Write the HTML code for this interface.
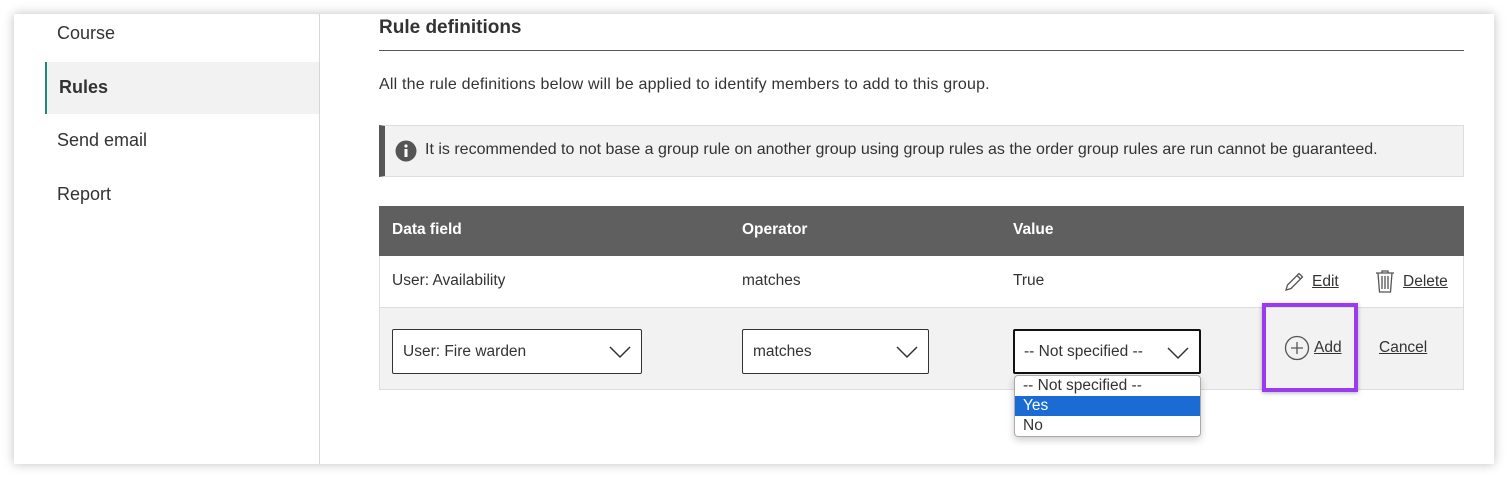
<!DOCTYPE html>
<html><head><style>
*{box-sizing:border-box;margin:0;padding:0}
body{width:1508px;height:478px;background:#fff;font-family:"Liberation Sans",sans-serif;color:#333;position:relative;overflow:hidden}
.card{position:absolute;left:14px;top:14px;width:1480px;height:450px;background:#fff;box-shadow:0 0 10px rgba(0,0,0,.25)}
.a{position:absolute}
.nav{font-size:18px;color:#333}
.sel{position:absolute;height:45px;border:1px solid #333;border-radius:2px;background:#fff;font-size:15.5px;padding-left:10px;line-height:43px}
.sel svg{position:absolute;right:10px;top:15px}
u{text-decoration:underline}
.t{font-size:15.5px}
</style></head><body>
<div class="card"></div>
<div class="a" style="left:319px;top:14px;width:1px;height:450px;background:#d6d6d6"></div>
<div class="a nav" style="left:57px;top:23px">Course</div>
<div class="a" style="left:45px;top:62px;width:274px;height:52px;background:#f2f2f2;border-left:2px solid #1f8a78"></div>
<div class="a nav" style="left:59px;top:77px;font-weight:bold">Rules</div>
<div class="a nav" style="left:57px;top:130px">Send email</div>
<div class="a nav" style="left:57px;top:184px">Report</div>

<div class="a" style="left:379px;top:17px;font-size:19px;font-weight:bold;color:#333">Rule definitions</div>
<div class="a" style="left:379px;top:50px;width:1085px;height:1px;background:#555"></div>
<div class="a" style="left:379px;top:76px;font-size:16px;letter-spacing:0.2px">All the rule definitions below will be applied to identify members to add to this group.</div>
<div class="a" style="left:379px;top:125px;width:1085px;height:52px;background:#f2f2f2;border:1px solid #ddd;border-left:6px solid #555"></div>
<svg class="a" style="left:395px;top:140px" width="22" height="22"><circle cx="11" cy="11" r="10.5" fill="#555"/><circle cx="11" cy="6" r="1.6" fill="#fff"/><rect x="9.5" y="9" width="3" height="8" fill="#fff"/></svg>
<div class="a" style="left:425px;top:141px;font-size:16px">It is recommended to not base a group rule on another group using group rules as the order group rules are run cannot be guaranteed.</div>

<div class="a" style="left:379px;top:206px;width:1085px;height:50px;background:#5f5f5f"></div>
<div class="a t" style="left:392px;top:221px;color:#fff;font-weight:bold">Data field</div>
<div class="a t" style="left:742px;top:221px;color:#fff;font-weight:bold">Operator</div>
<div class="a t" style="left:1013px;top:221px;color:#fff;font-weight:bold">Value</div>
<div class="a" style="left:379px;top:256px;width:1085px;height:134px;border:1px solid #ddd;border-top:none"></div>
<div class="a t" style="left:392px;top:272px">User: Availability</div>
<div class="a t" style="left:742px;top:272px">matches</div>
<div class="a t" style="left:1013px;top:272px">True</div>
<svg class="a" style="left:1284px;top:270px" width="22" height="22" fill="none" stroke="#555" stroke-width="1.3"><path d="M2 20l1.5-5L15 3.5l3.5 3.5L7 18.5z M13 5.5l3.5 3.5"/></svg>
<div class="a t" style="left:1312px;top:273px"><u>Edit</u></div>
<svg class="a" style="left:1374px;top:269px" width="22" height="24" fill="none" stroke="#555" stroke-width="1.3"><path d="M2 4h18M8 4V2h6v2M4 4l1.5 19h11L18 4M8 7v13M11 7v13M14 7v13"/></svg>
<div class="a t" style="left:1403px;top:273px"><u>Delete</u></div>
<div class="a" style="left:380px;top:307px;width:1083px;height:82px;background:#f2f2f2;border-top:1px solid #ddd"></div>
<div class="sel" style="left:392px;top:329px;width:250px">User: Fire warden<svg width="22" height="14" fill="none" stroke="#333" stroke-width="1.5"><path d="M1 2l10 10 10-10"/></svg></div>
<div class="sel" style="left:742px;top:329px;width:187px">matches<svg width="22" height="14" fill="none" stroke="#333" stroke-width="1.5"><path d="M1 2l10 10 10-10"/></svg></div>
<div class="sel" style="left:1013px;top:329px;width:188px;border:2px solid #111;line-height:41px;padding-left:9px">-- Not specified --<svg width="22" height="14" fill="none" stroke="#333" stroke-width="1.5"><path d="M1 2l10 10 10-10"/></svg></div>
<div class="a" style="left:1014px;top:375px;width:187px;height:62px;background:#fff;border:1px solid #aaa;border-radius:4px;font-size:15.5px;line-height:20px;box-shadow:0 3px 8px rgba(0,0,0,.2);overflow:hidden">
<div style="padding-left:8px">-- Not specified --</div>
<div style="padding-left:8px;background:#1a6bd4;color:#fff">Yes</div>
<div style="padding-left:8px">No</div></div>
<div class="a" style="left:1262px;top:303px;width:96px;height:89px;border:4px solid #9b3bef;box-shadow:0 1px 4px rgba(0,0,0,.3)"></div>
<svg class="a" style="left:1284px;top:335px" width="26" height="26" fill="none" stroke="#555" stroke-width="1.3"><circle cx="13" cy="13" r="11.5"/><path d="M13 7v12M7 13h12"/></svg>
<div class="a t" style="left:1314px;top:339px"><u>Add</u></div>
<div class="a t" style="left:1379px;top:339px"><u>Cancel</u></div>
</body></html>
